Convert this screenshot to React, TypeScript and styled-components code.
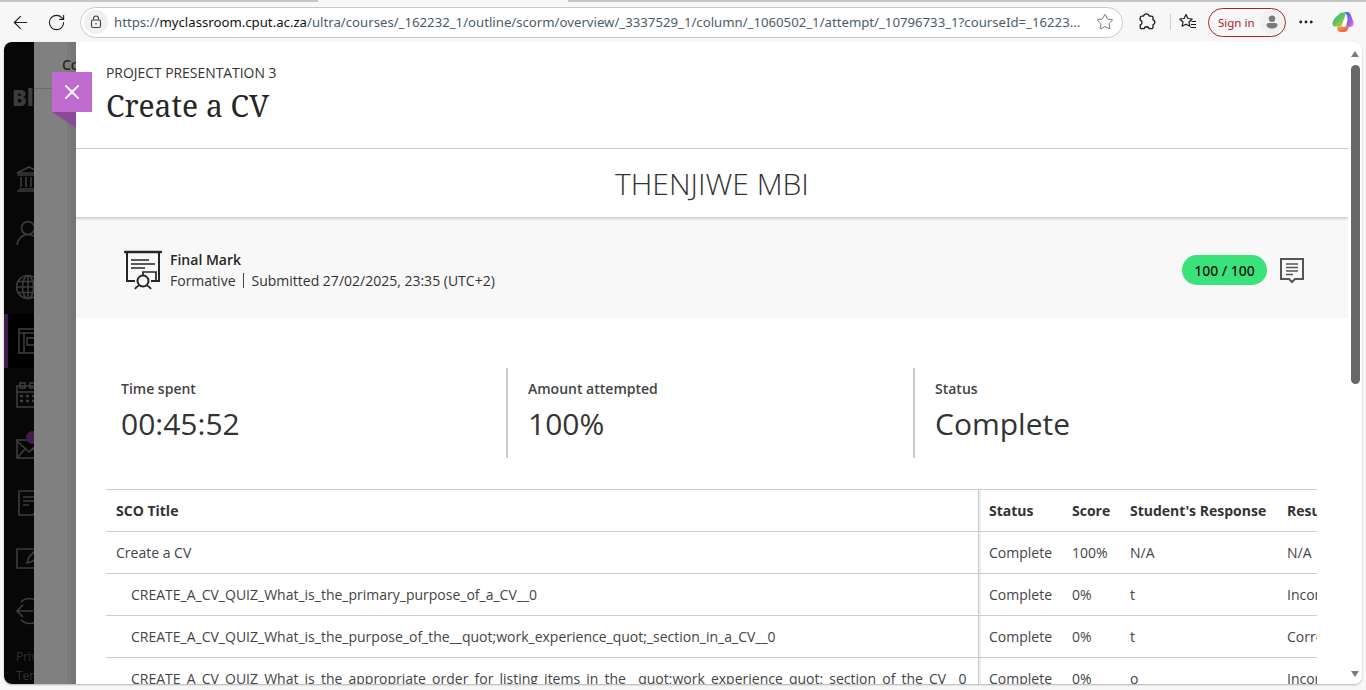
import React from "react";
import styled, { createGlobalStyle } from "styled-components";
import { ArrowLeft, RotateCw, Star, MoreHorizontal, X } from "lucide-react";

const Global = createGlobalStyle`
  html, body { margin: 0; padding: 0; height: 100%; overflow: hidden; background: #f7f7f7; }
  body { font-family: "Open Sans", "Noto Sans", sans-serif; color: #262626; }
  * { box-sizing: border-box; }
`;

const Page = styled.div`
  width: 1366px; height: 690px; display: flex; flex-direction: column; background: #f7f7f7; position: relative; overflow: hidden;
`;
const TabStrip = styled.div`
  height: 2px; flex: none; display: flex; background: #c6c6c6;
`;
const TabGap = styled.div`
  width: 250px; margin-left: 318px; background: #f7f7f7;
`;
const Toolbar = styled.div`
  height: 40px; flex: none; display: flex; align-items: center; padding: 0 0 0 2px;
`;
const NavBtn = styled.div<{ $w?: number }>`
  width: ${p => p.$w ?? 36}px; height: 32px; display: flex; align-items: center; justify-content: center; color: #1f1f1f; flex: none;
`;
const Address = styled.div`
  width: 1043px; height: 31px; margin-left: 6px; margin-right: 6px; border: 1px solid #c9c9c9; border-radius: 16px; background: #fff;
  display: flex; align-items: center; padding: 0 8px 0 3px; flex: none;
`;
const LockWrap = styled.div`
  width: 24px; height: 24px; border-radius: 50%; background: #f0f0f0; display: flex; align-items: center; justify-content: center; flex: none; margin-right: 6px;
`;
const Url = styled.div`
  font-family: "Noto Sans", "Open Sans", sans-serif; font-size: 13.2px; color: #4d5b6a; white-space: nowrap; flex: 1; overflow: hidden;
  b { font-weight: 400; color: #111; }
`;
const Divider = styled.div`
  width: 1px; height: 16px; background: #cfcfcf; margin: 0 3px 0 5px; flex: none;
`;
const SignIn = styled.div`
  width: 78px; height: 29px; margin-left: 6px; border: 1px solid #a8232a; border-radius: 15px; display: flex; align-items: center; justify-content: space-between;
  padding: 0 1px 0 9px; font-family: "Noto Sans", sans-serif; font-size: 11.5px; color: #a8232a; flex: none;
`;
const Avatar = styled.div`
  width: 24px; height: 24px; border-radius: 50%; background: #f1f1f1; display: flex; align-items: center; justify-content: center;
`;
const Viewport = styled.div`
  height: 642px; margin: 0 4px; display: flex; border-radius: 8px; overflow: hidden; flex: none; background: #fff; box-shadow: 0 1px 2px rgba(0,0,0,.28);
`;
const SideRail = styled.div`
  width: 30px; flex: none; background: #070707; display: flex; flex-direction: column; padding-top: 43px; overflow: hidden;
`;
const Logo = styled.div`
  font-family: "Open Sans", sans-serif; font-weight: 800; font-size: 22px; line-height: 24px; color: #3b3b3b; padding-left: 8px; height: 67px; flex: none; white-space: nowrap;
`;
const RailItem = styled.div<{ $active?: boolean }>`
  height: 54px; width: 30px; flex: none; display: flex; align-items: center; padding-left: ${p => p.$active ? 8 : 12}px; overflow: hidden; position: relative;
  background: ${p => p.$active ? "#000" : "transparent"};
  border-left: ${p => p.$active ? "4px solid #3f1c49" : "none"};
  svg { flex: none; }
`;
const Dot = styled.span`
  position: absolute; left: 22px; top: 9px; width: 13px; height: 13px; border-radius: 50%; background: #3f1c49;
`;
const RailFoot = styled.div`
  font-size: 12px; line-height: 19px; color: #303030; padding: 9px 0 0 12px; white-space: nowrap; overflow: hidden;
`;
const Dim = styled.div`
  width: 42px; flex: none; background: #808080; position: relative; overflow: visible; display: flex; justify-content: flex-end;
`;
const DimText = styled.div`
  position: absolute; left: 28px; top: 13px; font-size: 14px; font-weight: 600; color: #262626;
`;
const DimRule = styled.div`
  position: absolute; left: 0; top: 46px; width: 18px; height: 1px; background: #6c6c6c;
`;
const DimSlim = styled.div`
  width: 4px; background: #7b7b7b; height: 100%;
`;
const DimStripe = styled.div`
  width: 5px; background: #767676; height: 100%;
`;
const Modal = styled.div`
  width: 1272px; flex: none; height: 642px; overflow: hidden; background: #fff; position: relative; display: flex; flex-direction: column;
`;
const Header = styled.header`
  height: 107px; flex: none; padding: 21px 30px 0; border-bottom: 1px solid #cdcdcd;
`;
const Eyebrow = styled.div`
  font-size: 13.9px; line-height: 19px; color: #333;
`;
const Title = styled.h1`
  margin: 4px 0 0; font-family: "Noto Serif", "DejaVu Serif", "Liberation Serif", serif; font-weight: 400; font-size: 30px; line-height: 40px; color: #262626;
`;
const Student = styled.div`
  height: 69px; flex: none; display: flex; align-items: center; justify-content: center; font-size: 30px; font-weight: 300; color: #333; border-bottom: 1px solid #cfcfcf; box-shadow: 0 1px 3px rgba(0,0,0,.14); position: relative;
`;
const Grade = styled.section`
  height: 100px; flex: none; background: #f8f8f8; display: flex; align-items: center; padding: 4px 44px 0 48px;
`;
const GradeInfo = styled.div`
  margin-left: 8px; flex: 1;
`;
const GradeTitle = styled.div`
  font-size: 14px; font-weight: 600; line-height: 21px; color: #262626;
`;
const GradeSub = styled.div`
  font-size: 14px; line-height: 21px; color: #333; display: flex; align-items: center;
`;
const Sep = styled.span`
  width: 1px; height: 15px; background: #444; margin: 0 7.5px;
`;
const Pill = styled.div`
  width: 85px; height: 30px; border-radius: 15px; background: #3ae27c; color: #111; font-size: 14px; font-weight: 500; font-family: "Noto Sans", sans-serif; display: flex; align-items: center; justify-content: center; margin-right: 13px;
`;
const CommentSlot = styled.div`
  display: flex; margin-top: 3px;
`;
const Stats = styled.section`
  flex: none; display: flex; padding: 50px 0 0 45px; height: 171px;
`;
const Stat = styled.div<{ $first?: boolean }>`
  width: ${p => p.$first ? 385 : 407}px; height: 90px; padding: 11px 0 0 ${p => p.$first ? 0 : 20}px; border-left: ${p => p.$first ? "none" : "2px solid #c9c9c9"};
`;
const StatLabel = styled.div`
  font-size: 14px; line-height: 19px; font-weight: 600; color: #444;
`;
const StatValue = styled.div`
  font-size: 30px; line-height: 40px; margin-top: 6px; color: #333;
`;
const TableWrap = styled.div`
  margin-left: 30px; width: 1211px; overflow: hidden; border-top: 1px solid #cdcdcd; flex: none;
`;
const Table = styled.table`
  border-collapse: separate; border-spacing: 0; table-layout: fixed; width: 1300px; font-size: 14px; color: #444;
`;
const Th = styled.th<{ $sco?: boolean }>`
  height: 42px; text-align: left; font-weight: 700; color: #333; padding: 0 0 0 10px; border-bottom: 1px solid #cdcdcd; white-space: nowrap; overflow: hidden;
  ${p => p.$sco ? "border-right: 1px solid #c9c9c9; box-shadow: 2px 0 0 #efefef;" : ""}
`;
const Td = styled.td<{ $sco?: boolean; $indent?: boolean }>`
  height: 42px; padding: 0 0 0 ${p => p.$indent ? 25 : 10}px; border-bottom: 1px solid #cdcdcd; white-space: nowrap; overflow: hidden; color: #444;
  ${p => p.$sco ? "border-right: 1px solid #c9c9c9; box-shadow: 2px 0 0 #efefef;" : ""}
`;
const Scrollbar = styled.div`
  width: 14px; flex: none; background: #fff; position: relative; display: flex; flex-direction: column; align-items: center; padding-top: 9px;
`;
const Thumb = styled.div`
  width: 9px; height: 319px; border-radius: 5px; background: #686868; margin-top: 8px;
`;
const Arrow = styled.div<{ $down?: boolean }>`
  width: 0; height: 0; border-left: 4.5px solid transparent; border-right: 4.5px solid transparent;
  ${p => p.$down ? "border-top: 6px solid #7a7a7a; position: absolute; bottom: 7px;" : "border-bottom: 6px solid #7a7a7a;"}
`;
const CloseTab = styled.div`
  position: absolute; left: 52px; top: 72px; width: 40px; height: 40px; background: #c06bd0; display: flex; align-items: center; justify-content: center; color: #fff;
`;
const Fold = styled.div`
  position: absolute; left: 52px; top: 112px; width: 0; height: 0; border-top: 16px solid #8a4a97; border-left: 24px solid transparent;
`;

const rows = [
  { t: "Create a CV", i: false, s: "100%", r: "N/A", x: "N/A" },
  { t: "CREATE_A_CV_QUIZ_What_is_the_primary_purpose_of_a_CV__0", i: true, s: "0%", r: "t", x: "Incorrect" },
  { t: "CREATE_A_CV_QUIZ_What_is_the_purpose_of_the__quot;work_experience_quot;_section_in_a_CV__0", i: true, s: "0%", r: "t", x: "Correct" },
  { t: "CREATE_A_CV_QUIZ_What_is_the_appropriate_order_for_listing_items_in_the__quot;work_experience_quot;_section_of_the_CV__0", i: true, s: "0%", r: "o", x: "Incorrect" },
];

const Lock = () => (
  <svg width="14" height="14" viewBox="0 0 14 14" fill="none" stroke="#444" strokeWidth="1.1">
    <rect x="2.5" y="5" width="9" height="7.5" rx="1.5" />
    <path d="M4.5 5V3.5a2.5 2.5 0 0 1 5 0V5" />
    <circle cx="7" cy="8.7" r=".8" fill="#444" stroke="none" />
  </svg>
);
const Extension = () => (
  <svg width="20" height="20" viewBox="0 0 20 20" fill="none" stroke="#1a1a1a" strokeWidth="1.3" strokeLinejoin="round">
    <path d="M6.5 4.2a3 3 0 0 1 5.8 0h2.2a1.500 1.500 0 0 1 1.500 1.500v2.100a2.600 2.600 0 0 1 0 5v2.400a1.500 1.500 0 0 1-1.500 1.500h-2.300a2.700 2.700 0 0 0-5.200 0H4.700a1.500 1.500 0 0 1-1.500-1.500v-2.300a2.500 2.500 0 0 0 0-4.800V5.700a1.500 1.500 0 0 1 1.500-1.500z" />
  </svg>
);
const Favs = () => (
  <svg width="20" height="20" viewBox="0 0 20 20" fill="none" stroke="#1a1a1a" strokeWidth="1.2" strokeLinejoin="round">
    <path d="M8 2.5l1.900 4 4.300.5-3.200 3 .9 4.300L8 12.200l-3.900 2.100.9-4.300-3.200-3 4.300-.5z" />
    <path d="M13.5 9.500H18M13 12.500h5M12.500 15.500H18" />
  </svg>
);
const Person = () => (
  <svg width="16" height="16" viewBox="0 0 16 16" fill="#7a7a7a">
    <circle cx="8" cy="4.800" r="3.200" />
    <path d="M2.5 11c0-1.200 1-2 2.200-2h6.600c1.200 0 2.200.8 2.200 2 0 2.200-2.400 3.500-5.500 3.500S2.500 13.200 2.500 11z" />
  </svg>
);
const Copilot = () => (
  <svg width="24" height="24" viewBox="0 0 24 24">
    <defs>
      <linearGradient id="cpa" x1="0" y1="0" x2="1" y2="1"><stop offset="0" stopColor="#2fb5d8" /><stop offset=".5" stopColor="#5cc65a" /><stop offset="1" stopColor="#f2c83c" /></linearGradient>
      <linearGradient id="cpb" x1="0" y1="0" x2="1" y2="1"><stop offset="0" stopColor="#1f78e6" /><stop offset=".6" stopColor="#9a5ce4" /><stop offset="1" stopColor="#e57ad0" /></linearGradient>
      <linearGradient id="cpc" x1="0" y1="0" x2="1" y2="1"><stop offset="0" stopColor="#f7a53a" /><stop offset="1" stopColor="#ec4a52" /></linearGradient>
    </defs>
    <path d="M7.500 5C8.300 3.300 9.500 2.500 11.500 2.500H15L11 16.500H4.500C2 16.500.8 14.500 1.600 12.200 2.600 9.500 5 6 7.500 5z" fill="url(#cpa)" />
    <path d="M13 2h3c2 0 3.200 1 3.900 3l2.400 6.800c.9 2.800-.6 5.200-3.400 5.200H15l1.500-7C17 7.500 15.500 3 13 2z" fill="url(#cpb)" />
    <path d="M6 16.500h12l-1.400 3.300c-.7 1.500-2 2.200-3.600 2.200H9.500c-1.500 0-2.600-.7-2.900-2z" fill="url(#cpc)" />
    <path d="M12.800 9.500h3.400l-2.200 7h-3.400z" fill="#fff" />
  </svg>
);
const Certificate = () => (
  <svg width="38" height="40" viewBox="0 0 38 40" fill="none" stroke="#262626" strokeWidth="1.7">
    <path d="M1 2h36" strokeWidth="2.400" strokeLinecap="round" />
    <path d="M3 3v28h8M35 3v28h-8" strokeWidth="2" />
    <path d="M7 10h18M7 14h24M7 18h14" />
    <path d="M19 25v-3h13v9h-5" />
    <circle cx="19" cy="31" r="5.500" fill="#f8f8f8" strokeWidth="2" />
    <path d="M11 39c1-2 3-3 4-3.500M27 39c-1-2-3-3-4-3.500" />
  </svg>
);
const Comment = () => (
  <svg width="24" height="27" viewBox="0 0 24 27" fill="none" stroke="#555" strokeWidth="2">
    <path d="M1 1h22v20h-8l-3 3-3-3H1z" />
    <path d="M6 6h12M6 9.500h12M6 13h12M6 16.500h7" strokeWidth="1.600" />
  </svg>
);

const RailIcon: React.FC<{ children: React.ReactNode }> = ({ children }) => (
  <svg width="28" height="28" viewBox="0 0 28 28" fill="none" stroke="#3d3d3d" strokeWidth="1.6">{children}</svg>
);
const BankIcon = () => (
  <RailIcon>
    <path d="M1 8l12-6 12 6zM1 10h24M3 24h20M1 26h24M5 12v10M10 12v10M15 12v10M20 12v10" />
  </RailIcon>
);
const UserIcon = () => (
  <RailIcon>
    <circle cx="12" cy="9" r="6.500" />
    <path d="M1 26c.6-6 5-10.500 11-10.500S23 20 23.500 26" />
  </RailIcon>
);
const GlobeIcon = () => (
  <RailIcon>
    <circle cx="12" cy="14" r="11.500" />
    <ellipse cx="12" cy="14" rx="5.500" ry="11.500" />
    <path d="M.5 14h23M2 8.500h20M2 19.500h20M12 2.500v23" />
  </RailIcon>
);
const CourseIcon = () => (
  <RailIcon>
    <rect x="3" y="2" width="24" height="24" />
    <path d="M3 6h24M8 6v20" />
    <rect x="11" y="11" width="8" height="7" />
  </RailIcon>
);
const CalendarIcon = () => (
  <RailIcon>
    <rect x="1" y="5" width="24" height="21" />
    <path d="M1 11h24" />
    <rect x="4" y="2" width="5" height="5" />
    <rect x="14" y="2" width="5" height="5" />
    <path d="M4 15h3M10 15h3M16 15h3M4 20h3M10 20h3M16 20h3" strokeWidth="2.400" />
  </RailIcon>
);
const MailIcon = () => (
  <RailIcon>
    <rect x="1" y="5" width="24" height="18" />
    <path d="M1 6l12 11L25 6M1 23l8-9M25 23l-8-9" />
  </RailIcon>
);
const DocIcon = () => (
  <RailIcon>
    <path d="M3 2h20v16l-6 8H3z" />
    <path d="M7 8h14M7 12h12M7 16h6" />
  </RailIcon>
);
const PenIcon = () => (
  <RailIcon>
    <path d="M25 6H1v19h24v-8" />
    <path d="M11 20l2-6L24 3l4 4-11 11z" />
  </RailIcon>
);
const ExitIcon = () => (
  <RailIcon>
    <path d="M1 14h16M7 8l-6 6 6 6" />
    <path d="M5 5a12 12 0 0 1 19 3M5 23a12 12 0 0 0 19-3" />
  </RailIcon>
);

export default function App() {
  return (
    <Page>
      <Global />
      <TabStrip><TabGap /></TabStrip>
      <Toolbar>
        <NavBtn><ArrowLeft size={21} strokeWidth={1.3} /></NavBtn>
        <NavBtn><RotateCw size={19} strokeWidth={1.4} /></NavBtn>
        <Address>
          <LockWrap><Lock /></LockWrap>
          <Url>https://<b>myclassroom.cput.ac.za</b>/ultra/courses/_162232_1/outline/scorm/overview/_3337529_1/column/_1060502_1/attempt/_10796733_1?courseId=_16223...</Url>
          <Star size={18} strokeWidth={1.2} color="#666" />
        </Address>
        <NavBtn><Extension /></NavBtn>
        <Divider />
        <NavBtn $w={28}><Favs /></NavBtn>
        <SignIn>Sign in<Avatar><Person /></Avatar></SignIn>
        <NavBtn $w={40}><MoreHorizontal size={18} strokeWidth={1.8} /></NavBtn>
        <NavBtn $w={34}><Copilot /></NavBtn>
      </Toolbar>
      <Viewport>
        <SideRail>
          <Logo>Bl</Logo>
          <RailItem><BankIcon /></RailItem>
          <RailItem><UserIcon /></RailItem>
          <RailItem><GlobeIcon /></RailItem>
          <RailItem $active><CourseIcon /></RailItem>
          <RailItem><CalendarIcon /></RailItem>
          <RailItem><MailIcon /><Dot /></RailItem>
          <RailItem><DocIcon /></RailItem>
          <RailItem><PenIcon /></RailItem>
          <RailItem><ExitIcon /></RailItem>
          <RailFoot>Privacy<br />Terms</RailFoot>
        </SideRail>
        <Dim>
          <DimText>Co</DimText>
          <DimRule />
          <DimSlim />
          <DimStripe />
        </Dim>
        <Modal>
          <Header>
            <Eyebrow>PROJECT PRESENTATION 3</Eyebrow>
            <Title>Create a CV</Title>
          </Header>
          <Student>THENJIWE MBI</Student>
          <Grade>
            <Certificate />
            <GradeInfo>
              <GradeTitle>Final Mark</GradeTitle>
              <GradeSub>Formative<Sep />Submitted 27/02/2025, 23:35 (UTC+2)</GradeSub>
            </GradeInfo>
            <Pill>100 / 100</Pill>
            <CommentSlot><Comment /></CommentSlot>
          </Grade>
          <Stats>
            <Stat $first><StatLabel>Time spent</StatLabel><StatValue>00:45:52</StatValue></Stat>
            <Stat><StatLabel>Amount attempted</StatLabel><StatValue>100%</StatValue></Stat>
            <Stat><StatLabel>Status</StatLabel><StatValue>Complete</StatValue></Stat>
          </Stats>
          <TableWrap>
            <Table>
              <colgroup>
                <col style={{ width: 873 }} />
                <col style={{ width: 83 }} />
                <col style={{ width: 58 }} />
                <col style={{ width: 157 }} />
                <col style={{ width: 129 }} />
              </colgroup>
              <thead>
                <tr><Th $sco>SCO Title</Th><Th>Status</Th><Th>Score</Th><Th>Student's Response</Th><Th>Result</Th></tr>
              </thead>
              <tbody>
                {rows.map(r => (
                  <tr key={r.t}>
                    <Td $sco $indent={r.i}>{r.t}</Td>
                    <Td>Complete</Td>
                    <Td>{r.s}</Td>
                    <Td>{r.r}</Td>
                    <Td>{r.x}</Td>
                  </tr>
                ))}
              </tbody>
            </Table>
          </TableWrap>
        </Modal>
        <Scrollbar>
          <Arrow />
          <Thumb />
          <Arrow $down />
        </Scrollbar>
      </Viewport>
      <CloseTab><X size={24} strokeWidth={1.8} /></CloseTab>
      <Fold />
    </Page>
  );
}
